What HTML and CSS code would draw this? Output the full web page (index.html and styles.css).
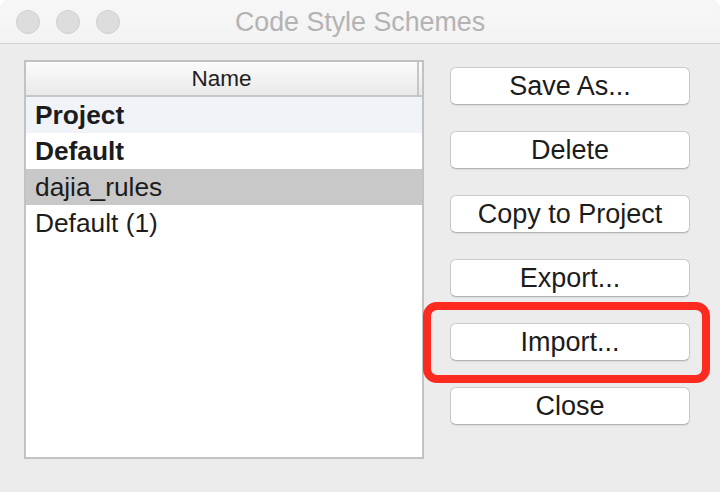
FILE: index.html
```html
<!DOCTYPE html>
<html>
<head>
<meta charset="utf-8">
<link rel="stylesheet" href="styles.css">
</head>
<body>
<div class="window">
  <div class="titlebar">
    <div class="lights">
      <span class="light"></span>
      <span class="light"></span>
      <span class="light"></span>
    </div>
    <div class="title">Code Style Schemes</div>
  </div>
  <div class="content">
    <div class="table">
      <div class="thead"><span class="th">Name</span></div>
      <div class="row row-alt bold">Project</div>
      <div class="row bold">Default</div>
      <div class="row row-sel">dajia_rules</div>
      <div class="row">Default (1)</div>
    </div>
    <div class="buttons">
      <button class="btn">Save As...</button>
      <button class="btn">Delete</button>
      <button class="btn">Copy to Project</button>
      <button class="btn">Export...</button>
      <button class="btn">Import...</button>
      <button class="btn">Close</button>
      <div class="highlight"></div>
    </div>
  </div>
</div>
</body>
</html>
```

FILE: styles.css
```css
html, body {
  margin: 0;
  padding: 0;
  background: #ffffff;
}
body {
  width: 720px;
  height: 492px;
  overflow: hidden;
  font-family: "Liberation Sans", Arial, sans-serif;
}
.window {
  width: 720px;
  height: 492px;
  background: #ececec;
  border-top-left-radius: 9px;
  border-top-right-radius: 9px;
  overflow: hidden;
  display: flex;
  flex-direction: column;
}
.titlebar {
  height: 43px;
  flex: none;
  background: linear-gradient(#f7f7f7, #f3f3f3);
  border-bottom: 1px solid #d1d1d1;
  position: relative;
  display: flex;
  align-items: center;
}
.lights {
  display: flex;
  gap: 16px;
  padding-left: 16px;
}
.light {
  width: 22px;
  height: 22px;
  border-radius: 50%;
  background: #dddddd;
  border: 1px solid #d0d0d0;
}
.title {
  position: absolute;
  left: 0;
  right: 0;
  top: 0;
  height: 43px;
  line-height: 44px;
  text-align: center;
  font-size: 26.8px;
  color: #b3b3b3;
}
.content {
  flex: 1;
  display: flex;
  padding: 16px 0 0 24px;
  gap: 26px;
}
.table {
  width: 396px;
  height: 395px;
  background: #ffffff;
  border: 2px solid #c2c2c2;
}
.thead {
  height: 33px;
  background: linear-gradient(#fbfbfb, #e9e9e9);
  border-bottom: 2px solid #c6c6c6;
  display: flex;
}
.th {
  flex: 1;
  text-align: center;
  font-size: 22.5px;
  line-height: 34px;
  color: #1e1e1e;
  border-right: 2px solid #c6c6c6;
  margin-right: 3px;
}
.row {
  height: 36px;
  line-height: 37px;
  padding-left: 9px;
  font-size: 26.3px;
  color: #1c1c1c;
}
.row-alt {
  background: #f0f4f9;
}
.row-sel {
  background: #c8c8c8;
}
.bold {
  font-weight: bold;
}
.buttons {
  position: relative;
  display: flex;
  flex-direction: column;
  gap: 26px;
  padding-top: 7px;
  width: 240px;
}
.btn {
  width: 240px;
  height: 38px;
  background: #ffffff;
  border: 1px solid #c9c9c9;
  border-bottom-color: #b4b4b4;
  border-radius: 6px;
  box-shadow: 0 1px 1px rgba(0, 0, 0, 0.08);
  font-family: "Liberation Sans", Arial, sans-serif;
  font-size: 27px;
  color: #1c1c1c;
  padding: 0;
  line-height: 36px;
}
.highlight {
  position: absolute;
  left: -27px;
  top: 242px;
  width: 271px;
  height: 65px;
  border: 8px solid #fc2a1f;
  border-radius: 14px;
}
```
